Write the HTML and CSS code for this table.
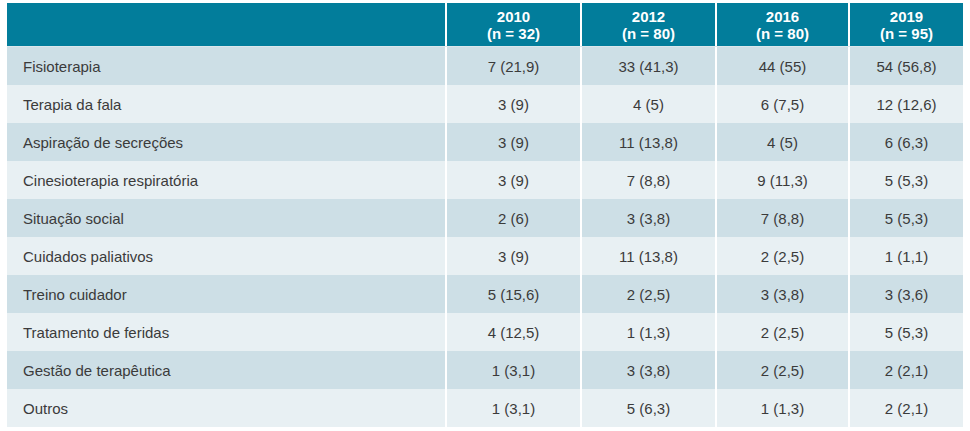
FILE: index.html
```html
<!DOCTYPE html>
<html lang="pt">
<head>
<meta charset="utf-8">
<title>Tabela</title>
<link rel="stylesheet" href="styles.css">
</head>
<body>
<div class="table">
  <div class="row head">
    <div class="cell label"></div>
    <div class="cell">2010<br>(n = 32)</div>
    <div class="cell">2012<br>(n = 80)</div>
    <div class="cell">2016<br>(n = 80)</div>
    <div class="cell">2019<br>(n = 95)</div>
  </div>
  <div class="row dark">
    <div class="cell label">Fisioterapia</div>
    <div class="cell">7 (21,9)</div>
    <div class="cell">33 (41,3)</div>
    <div class="cell">44 (55)</div>
    <div class="cell">54 (56,8)</div>
  </div>
  <div class="row light">
    <div class="cell label">Terapia da fala</div>
    <div class="cell">3 (9)</div>
    <div class="cell">4 (5)</div>
    <div class="cell">6 (7,5)</div>
    <div class="cell">12 (12,6)</div>
  </div>
  <div class="row dark">
    <div class="cell label">Aspiração de secreções</div>
    <div class="cell">3 (9)</div>
    <div class="cell">11 (13,8)</div>
    <div class="cell">4 (5)</div>
    <div class="cell">6 (6,3)</div>
  </div>
  <div class="row light">
    <div class="cell label">Cinesioterapia respiratória</div>
    <div class="cell">3 (9)</div>
    <div class="cell">7 (8,8)</div>
    <div class="cell">9 (11,3)</div>
    <div class="cell">5 (5,3)</div>
  </div>
  <div class="row dark">
    <div class="cell label">Situação social</div>
    <div class="cell">2 (6)</div>
    <div class="cell">3 (3,8)</div>
    <div class="cell">7 (8,8)</div>
    <div class="cell">5 (5,3)</div>
  </div>
  <div class="row light">
    <div class="cell label">Cuidados paliativos</div>
    <div class="cell">3 (9)</div>
    <div class="cell">11 (13,8)</div>
    <div class="cell">2 (2,5)</div>
    <div class="cell">1 (1,1)</div>
  </div>
  <div class="row dark">
    <div class="cell label">Treino cuidador</div>
    <div class="cell">5 (15,6)</div>
    <div class="cell">2 (2,5)</div>
    <div class="cell">3 (3,8)</div>
    <div class="cell">3 (3,6)</div>
  </div>
  <div class="row light">
    <div class="cell label">Tratamento de feridas</div>
    <div class="cell">4 (12,5)</div>
    <div class="cell">1 (1,3)</div>
    <div class="cell">2 (2,5)</div>
    <div class="cell">5 (5,3)</div>
  </div>
  <div class="row dark">
    <div class="cell label">Gestão de terapêutica</div>
    <div class="cell">1 (3,1)</div>
    <div class="cell">3 (3,8)</div>
    <div class="cell">2 (2,5)</div>
    <div class="cell">2 (2,1)</div>
  </div>
  <div class="row light">
    <div class="cell label">Outros</div>
    <div class="cell">1 (3,1)</div>
    <div class="cell">5 (6,3)</div>
    <div class="cell">1 (1,3)</div>
    <div class="cell">2 (2,1)</div>
  </div>
</div>
</body>
</html>
```

FILE: styles.css
```css
html, body {
  margin: 0;
  padding: 0;
  background: #ffffff;
}
body {
  padding: 3px 7px;
  font-family: "Liberation Sans", Arial, sans-serif;
  font-size: 15px;
  color: #3b3b3b;
}
.table {
  width: 956px;
  display: flex;
  flex-direction: column;
}
.row {
  display: grid;
  grid-template-columns: 438px 133px 133px 131px 113px;
  column-gap: 2px;
  height: 38px;
}
.row.head {
  height: 43px;
  border-bottom: 1px solid #dbe7ec;
}
.cell {
  display: flex;
  align-items: center;
  justify-content: center;
  text-align: center;
}
.cell.label {
  justify-content: flex-start;
  padding-left: 16px;
  text-align: left;
}
.head .cell {
  background: #027d9b;
  color: #ffffff;
  font-weight: bold;
  line-height: 17px;
}
.dark .cell {
  background: #cddfe6;
}
.light .cell {
  background: #e8f0f3;
}
```
